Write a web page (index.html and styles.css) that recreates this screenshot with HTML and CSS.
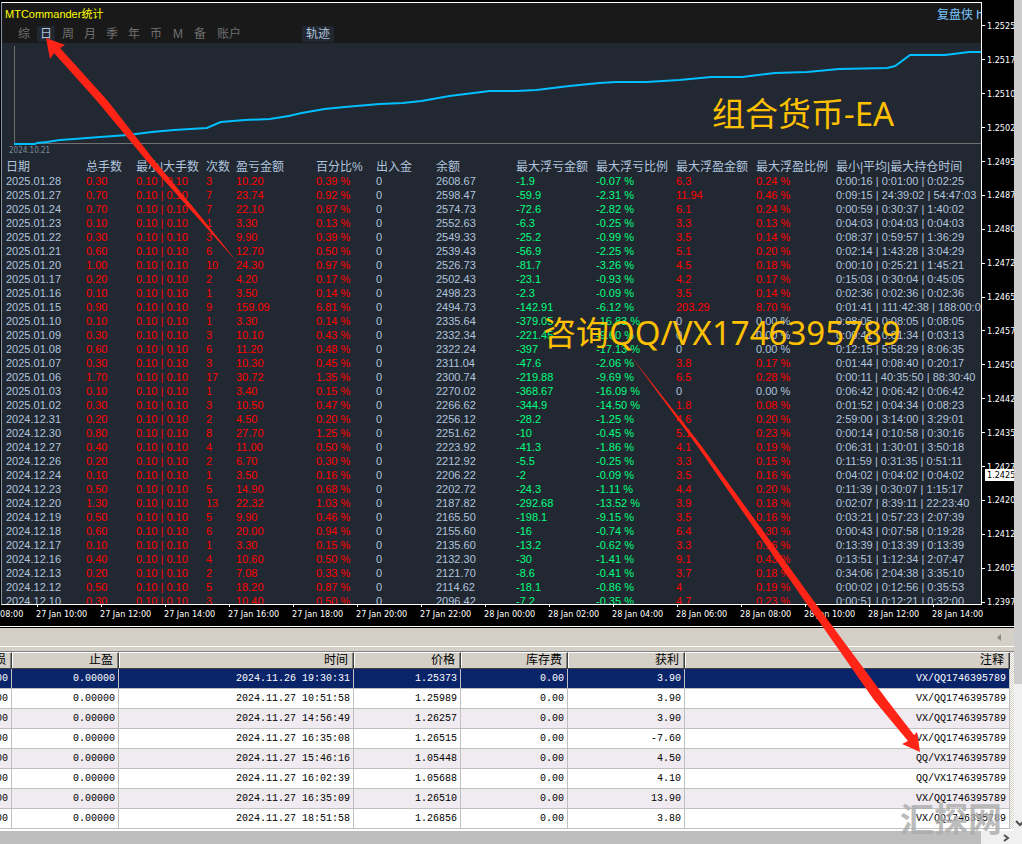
FILE: index.html
```html
<!DOCTYPE html>
<html lang="zh-CN">
<head>
<meta charset="utf-8">
<title>MTCommander统计</title>
<link rel="stylesheet" href="styles.css">
</head>
<body>
<div class="page">
<main class="window">
<section class="terminal">
<div class="panel">
<header class="panel-head">
<div class="title-row"><h1 class="title">MTCommander统计</h1><a class="site" href="#">复盘侠 http</a></div>
<nav class="tabs">
<button class="tab">综</button><button class="tab active">日</button><button class="tab">周</button><button class="tab">月</button><button class="tab">季</button><button class="tab">年</button><button class="tab">币</button><button class="tab">M</button><button class="tab">备</button><button class="tab wide">账户</button><button class="tab wide active track">轨迹</button>
</nav>
</header>
<div class="curve">
<svg class="curve-plot" viewBox="0 0 980 104" preserveAspectRatio="none" aria-hidden="true">
<path class="axis" d="M12.5 3V100.500H980"/>
<path class="equity" d="M12 101H33L35 100L45 99L58 97L72 96L98 94L126 92L150 89L172 87L205 85L219 79L243 77L268 76L287 73L300 70L323 66L343 64L378 61L401 60L420 58L448 53L488 48H515L535 47L568 43L598 40L615 39H645L678 37L710 34L741 34L774 30L806 29L838 26L886 25L894 23L909 12H944L968 9H980"/>
</svg>
<span class="curve-date">2024.10.21</span>
</div>
<table class="stats">
<colgroup><col class="w80"><col class="w50"><col class="w70"><col class="w30"><col class="w80"><col class="w60"><col class="w60"><col class="w80"><col class="w80"><col class="w80"><col class="w80"><col class="w80"><col></colgroup>
<thead><tr><th>日期<th>总手数<th>最小|大手数<th>次数<th>盈亏金额<th>百分比%<th>出入金<th>余额<th>最大浮亏金额<th>最大浮亏比例<th>最大浮盈金额<th>最大浮盈比例<th>最小|平均|最大持仓时间</tr></thead>
<tbody>
<tr><td>2025.01.28<td>0.30<td>0.10 | 0.10<td>3<td>10.20<td>0.39 %<td>0<td>2608.67<td>-1.9<td>-0.07 %<td>6.3<td>0.24 %<td>0:00:16 | 0:01:00 | 0:02:25</tr>
<tr><td>2025.01.27<td>0.70<td>0.10 | 0.10<td>7<td>23.74<td>0.92 %<td>0<td>2598.47<td>-59.9<td>-2.31 %<td>11.94<td>0.46 %<td>0:09:15 | 24:39:02 | 54:47:03</tr>
<tr><td>2025.01.24<td>0.70<td>0.10 | 0.10<td>7<td>22.10<td>0.87 %<td>0<td>2574.73<td>-72.6<td>-2.82 %<td>6.1<td>0.24 %<td>0:00:59 | 0:30:37 | 1:40:02</tr>
<tr><td>2025.01.23<td>0.10<td>0.10 | 0.10<td>1<td>3.30<td>0.13 %<td>0<td>2552.63<td>-6.3<td>-0.25 %<td>3.3<td>0.13 %<td>0:04:03 | 0:04:03 | 0:04:03</tr>
<tr><td>2025.01.22<td>0.30<td>0.10 | 0.10<td>3<td>9.90<td>0.39 %<td>0<td>2549.33<td>-25.2<td>-0.99 %<td>3.5<td>0.14 %<td>0:08:37 | 0:59:57 | 1:36:29</tr>
<tr><td>2025.01.21<td>0.60<td>0.10 | 0.10<td>6<td>12.70<td>0.50 %<td>0<td>2539.43<td>-56.9<td>-2.25 %<td>5.1<td>0.20 %<td>0:02:14 | 1:43:28 | 3:04:29</tr>
<tr><td>2025.01.20<td>1.00<td>0.10 | 0.10<td>10<td>24.30<td>0.97 %<td>0<td>2526.73<td>-81.7<td>-3.26 %<td>4.5<td>0.18 %<td>0:00:10 | 0:25:21 | 1:45:21</tr>
<tr><td>2025.01.17<td>0.20<td>0.10 | 0.10<td>2<td>4.20<td>0.17 %<td>0<td>2502.43<td>-23.1<td>-0.93 %<td>4.2<td>0.17 %<td>0:15:03 | 0:30:04 | 0:45:05</tr>
<tr><td>2025.01.16<td>0.10<td>0.10 | 0.10<td>1<td>3.50<td>0.14 %<td>0<td>2498.23<td>-2.3<td>-0.09 %<td>3.5<td>0.14 %<td>0:02:36 | 0:02:36 | 0:02:36</tr>
<tr><td>2025.01.15<td>0.90<td>0.10 | 0.10<td>9<td>159.09<td>6.81 %<td>0<td>2494.73<td>-142.91<td>-6.12 %<td>203.29<td>8.70 %<td>0:01:41 | 111:42:38 | 188:00:01</tr>
<tr class="flat"><td>2025.01.10<td>0.10<td>0.10 | 0.10<td>1<td>3.30<td>0.14 %<td>0<td>2335.64<td>-379.05<td>-16.83 %<td>0<td>0.00 %<td>0:08:05 | 0:08:05 | 0:08:05</tr>
<tr class="flat"><td>2025.01.09<td>0.30<td>0.10 | 0.10<td>3<td>10.10<td>0.43 %<td>0<td>2332.34<td>-221.45<td>-9.60 %<td>0<td>0.00 %<td>0:00:41 | 0:01:34 | 0:03:13</tr>
<tr class="flat"><td>2025.01.08<td>0.60<td>0.10 | 0.10<td>6<td>11.20<td>0.48 %<td>0<td>2322.24<td>-397<td>-17.13 %<td>0<td>0.00 %<td>0:12:15 | 5:58:29 | 8:06:35</tr>
<tr><td>2025.01.07<td>0.30<td>0.10 | 0.10<td>3<td>10.30<td>0.45 %<td>0<td>2311.04<td>-47.6<td>-2.06 %<td>3.8<td>0.17 %<td>0:01:44 | 0:08:40 | 0:20:17</tr>
<tr><td>2025.01.06<td>1.70<td>0.10 | 0.10<td>17<td>30.72<td>1.35 %<td>0<td>2300.74<td>-219.88<td>-9.69 %<td>6.5<td>0.28 %<td>0:00:11 | 40:35:50 | 88:30:40</tr>
<tr class="flat"><td>2025.01.03<td>0.10<td>0.10 | 0.10<td>1<td>3.40<td>0.15 %<td>0<td>2270.02<td>-368.67<td>-16.09 %<td>0<td>0.00 %<td>0:06:42 | 0:06:42 | 0:06:42</tr>
<tr><td>2025.01.02<td>0.30<td>0.10 | 0.10<td>3<td>10.50<td>0.47 %<td>0<td>2266.62<td>-344.9<td>-14.50 %<td>1.8<td>0.08 %<td>0:01:52 | 0:04:34 | 0:08:23</tr>
<tr><td>2024.12.31<td>0.20<td>0.10 | 0.10<td>2<td>4.50<td>0.20 %<td>0<td>2256.12<td>-28.2<td>-1.25 %<td>4.6<td>0.20 %<td>2:59:00 | 3:14:00 | 3:29:01</tr>
<tr><td>2024.12.30<td>0.80<td>0.10 | 0.10<td>8<td>27.70<td>1.25 %<td>0<td>2251.62<td>-10<td>-0.45 %<td>5.1<td>0.23 %<td>0:00:14 | 0:10:58 | 0:30:16</tr>
<tr><td>2024.12.27<td>0.40<td>0.10 | 0.10<td>4<td>11.00<td>0.50 %<td>0<td>2223.92<td>-41.3<td>-1.86 %<td>4.1<td>0.19 %<td>0:06:31 | 1:30:01 | 3:50:18</tr>
<tr><td>2024.12.26<td>0.20<td>0.10 | 0.10<td>2<td>6.70<td>0.30 %<td>0<td>2212.92<td>-5.5<td>-0.25 %<td>3.3<td>0.15 %<td>0:11:59 | 0:31:35 | 0:51:11</tr>
<tr><td>2024.12.24<td>0.10<td>0.10 | 0.10<td>1<td>3.50<td>0.16 %<td>0<td>2206.22<td>-2<td>-0.09 %<td>3.5<td>0.16 %<td>0:04:02 | 0:04:02 | 0:04:02</tr>
<tr><td>2024.12.23<td>0.50<td>0.10 | 0.10<td>5<td>14.90<td>0.68 %<td>0<td>2202.72<td>-24.3<td>-1.11 %<td>4.4<td>0.20 %<td>0:11:39 | 0:30:07 | 1:15:17</tr>
<tr><td>2024.12.20<td>1.30<td>0.10 | 0.10<td>13<td>22.32<td>1.03 %<td>0<td>2187.82<td>-292.68<td>-13.52 %<td>3.9<td>0.18 %<td>0:02:07 | 8:39:11 | 22:23:40</tr>
<tr><td>2024.12.19<td>0.50<td>0.10 | 0.10<td>5<td>9.90<td>0.46 %<td>0<td>2165.50<td>-198.1<td>-9.15 %<td>3.5<td>0.16 %<td>0:03:21 | 0:57:23 | 2:07:39</tr>
<tr><td>2024.12.18<td>0.60<td>0.10 | 0.10<td>6<td>20.00<td>0.94 %<td>0<td>2155.60<td>-16<td>-0.74 %<td>6.4<td>0.30 %<td>0:00:43 | 0:07:58 | 0:19:28</tr>
<tr><td>2024.12.17<td>0.10<td>0.10 | 0.10<td>1<td>3.30<td>0.15 %<td>0<td>2135.60<td>-13.2<td>-0.62 %<td>3.3<td>0.16 %<td>0:13:39 | 0:13:39 | 0:13:39</tr>
<tr><td>2024.12.16<td>0.40<td>0.10 | 0.10<td>4<td>10.60<td>0.50 %<td>0<td>2132.30<td>-30<td>-1.41 %<td>9.1<td>0.43 %<td>0:13:51 | 1:12:34 | 2:07:47</tr>
<tr><td>2024.12.13<td>0.20<td>0.10 | 0.10<td>2<td>7.08<td>0.33 %<td>0<td>2121.70<td>-8.6<td>-0.41 %<td>3.7<td>0.18 %<td>0:34:06 | 2:04:38 | 3:35:10</tr>
<tr><td>2024.12.12<td>0.50<td>0.10 | 0.10<td>5<td>18.20<td>0.87 %<td>0<td>2114.62<td>-18.1<td>-0.86 %<td>4<td>0.19 %<td>0:00:02 | 0:12:56 | 0:35:53</tr>
<tr><td>2024.12.10<td>0.30<td>0.10 | 0.10<td>3<td>10.40<td>0.50 %<td>0<td>2096.42<td>-7.2<td>-0.35 %<td>4.7<td>0.23 %<td>0:00:51 | 0:12:21 | 0:32:00</tr>
</tbody>
</table>
</div>
<div class="prices"><span>1.2525</span><span>1.2517</span><span>1.2510</span><span>1.2502</span><span>1.2495</span><span>1.2487</span><span>1.2480</span><span>1.2472</span><span>1.2465</span><span>1.2457</span><span>1.2450</span><span>1.2442</span><span>1.2435</span><span>1.2427</span><span>1.2420</span><span>1.2412</span><span>1.2405</span><span>1.2397</span><b class="bid">1.2425</b></div>
<div class="times"><span class="cut">08:00</span><span>27 Jan 10:00</span><span>27 Jan 12:00</span><span>27 Jan 14:00</span><span>27 Jan 16:00</span><span>27 Jan 18:00</span><span>27 Jan 20:00</span><span>27 Jan 22:00</span><span>28 Jan 00:00</span><span>28 Jan 02:00</span><span>28 Jan 04:00</span><span>28 Jan 06:00</span><span>28 Jan 08:00</span><span>28 Jan 10:00</span><span>28 Jan 12:00</span><span>28 Jan 14:00</span></div>
</section>
<div class="tabbar"><svg width="4" height="7" viewBox="0 0 4 7" aria-hidden="true"><path d="M4 0V7L0 3.500Z" fill="#8a8a8a"/></svg></div>
<section class="orders-area">
<div class="orders-clip">
<table class="orders">
<colgroup><col class="o107"><col class="o107"><col class="o235"><col class="o107"><col class="o107"><col class="o117"><col></colgroup>
<thead><tr><th>止损<th>止盈<th>时间<th>价格<th>库存费<th>获利<th>注释</tr></thead>
<tbody>
<tr class="selected"><td>0.00000<td>0.00000<td>2024.11.26 19:30:31<td>1.25373<td>0.00<td>3.90<td>VX/QQ1746395789</tr>
<tr><td>0.00000<td>0.00000<td>2024.11.27 10:51:58<td>1.25989<td>0.00<td>3.90<td>VX/QQ1746395789</tr>
<tr><td>0.00000<td>0.00000<td>2024.11.27 14:56:49<td>1.26257<td>0.00<td>3.90<td>VX/QQ1746395789</tr>
<tr><td>0.00000<td>0.00000<td>2024.11.27 16:35:08<td>1.26515<td>0.00<td>-7.60<td>VX/QQ1746395789</tr>
<tr><td>0.00000<td>0.00000<td>2024.11.27 15:46:16<td>1.05448<td>0.00<td>4.50<td>QQ/VX1746395789</tr>
<tr><td>0.00000<td>0.00000<td>2024.11.27 16:02:39<td>1.05688<td>0.00<td>4.10<td>QQ/VX1746395789</tr>
<tr><td>0.00000<td>0.00000<td>2024.11.27 16:35:09<td>1.26510<td>0.00<td>13.90<td>VX/QQ1746395789</tr>
<tr><td>0.00000<td>0.00000<td>2024.11.27 18:51:58<td>1.26856<td>0.00<td>3.80<td>VX/QQ1746395789</tr>
</tbody>
</table>
</div>
<div class="inner-scroll"></div>
</section>
</main>
<aside class="v-scroll"><div class="v-thumb"></div><svg width="8" height="8" viewBox="0 0 8 8" aria-hidden="true"><path d="M2 2L6 6L9 3" fill="none" stroke="#505050" stroke-width="2"/></svg></aside>
<footer class="h-scroll"><div class="h-thumb"></div><svg width="7" height="8" viewBox="0 0 7 8" aria-hidden="true"><path d="M1 1L5 4L1 7" fill="none" stroke="#505050" stroke-width="2"/></svg></footer>
<p class="note note-top">组合货币-EA</p>
<p class="note note-mid">咨询QQ/VX1746395789</p>
<svg class="arrows" width="1022" height="844" viewBox="0 0 1022 844" aria-hidden="true">
<path fill="#ff2416" d="M46 38L65 45L60 48L107 100L154 160L202 218L237 262L196 216L146 160L97 101L54 53L50 59Z"/>
<path fill="#ff2416" d="M630 355L700 444L813 600L887 700L914 735L917 732L920 752L902 744L908 741L874 700L804 600L698 447Z"/>
</svg>
<p class="watermark">汇探网</p>
</div>
</body>
</html>
```

FILE: styles.css
```css
* { box-sizing: border-box; }
body { margin: 0; background: #000; font-family: "Liberation Sans", "Noto Sans CJK SC", sans-serif; font-size: 12px; }
.page { position: relative; display: grid; grid-template-columns: minmax(0, 1fr) 8px; overflow: hidden; }
.window { min-width: 0; background: #d4d0c8; }

.terminal { display: grid; grid-template-columns: minmax(0, 1fr) 32px; grid-template-rows: 603px 21px; padding-top: 2px; background: #000; color: #fff; }
.panel { margin-left: 1px; border-left: 1px solid #8596a5; border-top: 1px solid #fff; border-right: 1px solid #fff; border-bottom: 1px solid #fff; background: #222831; overflow: hidden; }
.panel-head { background: #191919; height: 40px; }
.title-row { display: flex; align-items: center; height: 20px; padding-left: 3px; overflow: hidden; }
.title { flex: 1; margin: 0; color: #ff0; font-size: 11px; font-weight: 400; }
.site { width: 44px; color: #7cc8ff; text-decoration: none; white-space: nowrap; }
.tabs { display: flex; gap: 4px; padding: 3px 0 0 13px; }
.tab { width: 18px; height: 16px; padding: 0; border: 0; border-radius: 2px; background: transparent; color: #707070; font: 12px/16px "Liberation Sans", "Noto Sans CJK SC", sans-serif; text-align: center; }
.tab.wide { width: 32px; }
.tab.active { background: #222831; color: #b0c4de; }
.tab.track { margin-left: 53px; }

.curve { height: 115px; }
.curve-plot { display: block; width: 100%; height: 104px; }
.axis { fill: none; stroke: #707070; stroke-width: 1; }
.equity { fill: none; stroke: #00bfff; stroke-width: 2; }
.curve-date { display: block; padding-left: 7px; color: #778899; font: 8px/8px "DejaVu Sans Condensed", "Liberation Sans", sans-serif; }

table { border-collapse: separate; border-spacing: 0; table-layout: fixed; width: 100%; }
th, td { padding: 0; font-weight: 400; white-space: nowrap; }
.stats { margin-left: 4px; width: calc(100% - 4px); color: #b0c4de; text-align: left; }
.stats th { height: 16px; padding-top: 2px; line-height: 14px; font-size: 12px; }
.stats td { height: 14px; line-height: 14px; font-size: 11px; }
.stats td:nth-child(n+2):nth-child(-n+6), .stats td:nth-child(11), .stats td:nth-child(12) { color: #f00; }
.stats td:nth-child(9), .stats td:nth-child(10) { color: #00ff7f; }
.stats .flat td:nth-child(n+11) { color: #b0c4de; }
.w30 { width: 30px; } .w50 { width: 50px; } .w60 { width: 60px; } .w70 { width: 70px; } .w80 { width: 80px; }

.prices { grid-column: 2; grid-row: 1 / 3; position: relative; display: flex; flex-direction: column; padding: 7px 0; overflow: hidden; font: 9px/12px "DejaVu Sans Condensed", "Liberation Sans", sans-serif; }
.prices span { flex: 1; display: flex; align-items: center; gap: 2px; }
.prices span::before { content: ""; flex: 0 0 3px; height: 1px; background: #fff; }
.bid { position: absolute; top: 467px; left: 3px; right: 0; padding-left: 2px; background: #fff; color: #000; font-weight: 400; }
.times { grid-column: 1 / 3; grid-row: 2; display: flex; overflow: hidden; font: 9px/18px "DejaVu Sans Condensed", "Liberation Sans", sans-serif; white-space: nowrap; }
.times span { flex: 0 0 64px; }
.times span::before { content: ""; display: block; width: 1px; height: 3px; margin: -1px 0 -2px 1px; background: #fff; }
.times .cut { flex-basis: 36px; }
.times .cut::before { visibility: hidden; }

.tabbar { display: flex; justify-content: flex-end; align-items: center; height: 25px; border-top: 1px solid #fff; border-bottom: 4px solid #d4d0c8; box-shadow: inset 0 1px #000, inset 0 -1px #fff; padding-right: 13px; }
.orders-area { display: grid; grid-template-columns: minmax(0, 1fr) 4px; border-top: 1px solid #808080; border-bottom: 2px solid #fff; }
.orders-clip { overflow: hidden; background: #fff; }
.orders { margin-left: -95px; width: calc(100% + 95px); text-align: right; }
.orders th { height: 17px; padding-right: 5px; line-height: 15px; font-size: 12px; background: #d4d0c8; color: #000; border-right: 1px solid #404040; border-bottom: 1px solid #404040; border-top: 1px solid #fff; box-shadow: inset -1px 0 #808080, inset 1px 0 #fff; }
.orders td { height: 20px; padding-right: 3px; border-right: 1px solid #c0c0c0; border-bottom: 1px solid #c0c0c0; color: #000; font: 10px/19px "Liberation Mono", monospace; }
.orders tr:nth-child(odd) td { background: #f0ebf0; }
.orders tr.selected td { background: #0a246a; color: #fff; }
.o107 { width: 107px; } .o117 { width: 117px; } .o235 { width: 235px; }
.inner-scroll { background: repeating-conic-gradient(#fff 0 25%, #d4d0c8 0 50%) 0 0 / 2px 2px; }

.v-scroll { display: flex; flex-direction: column; align-items: flex-end; background: #f0f0f0; padding-bottom: 4px; }
.v-thumb { width: 8px; height: 684px; background: #cdcdcd; margin-bottom: auto; }
.h-scroll { grid-column: 1 / 3; display: flex; align-items: center; height: 14px; background: #f0f0f0; padding-right: 12px; }
.h-thumb { flex: 1; align-self: stretch; margin-right: 22px; background: #bdbdbd; }

.note, .watermark { position: absolute; margin: 0; white-space: nowrap; font-family: "Noto Sans", "Noto Sans CJK SC", sans-serif; font-size: 33px; line-height: 46px; }
.note { color: #ffc000; }
.note-top { left: 712px; top: 91px; }
.note-mid { left: 543px; top: 310px; }
.arrows { position: absolute; left: 0; top: 0; }
.watermark { left: 900px; top: 796px; font-size: 34px; font-weight: 700; color: rgba(170, 170, 170, 0.8); }
```
